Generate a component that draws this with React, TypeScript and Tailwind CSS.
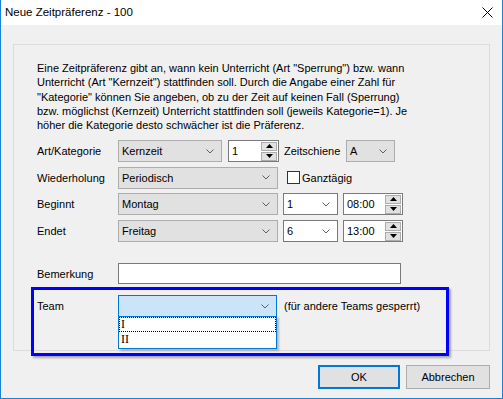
const font = "font-['Liberation_Sans',Arial,sans-serif]";

const Chevron = () => (
    <svg width="8" height="5" viewBox="0 0 8 5" className="shrink-0">
        <path d="M0.5 0.5 L4 4 L7.5 0.5" fill="none" stroke="#606060" strokeWidth="1" />
    </svg>
);

interface ComboProps {
    value: string
    width: string
    editable?: boolean
    focused?: boolean
};

const Combo = ({ value, width, editable, focused }: ComboProps) => {
    let cls = "bg-[#e1e1e1] border-[#adadad]";
    if (editable) cls = "bg-white border-[#7a7a7a]";
    if (focused) cls = "bg-[#cce4f7] border-[#0078d7]";
    return (
        <div className={`${width} h-[22px] border ${cls} flex items-center justify-between pl-[3px] pr-[7px]`}>
            <span>{value}</span>
            <Chevron />
        </div>
    );
}

const SpinArrows = () => (
    <div className="flex flex-col gap-[1px] w-[16px] mr-[1px]">
        <div className="h-[9px] bg-[#e1e1e1] border border-[#adadad] flex items-center justify-center">
            <svg width="7" height="4" viewBox="0 0 7 4"><path d="M0 4 L3.5 0 L7 4 Z" fill="#000" /></svg>
        </div>
        <div className="h-[9px] bg-[#e1e1e1] border border-[#adadad] flex items-center justify-center">
            <svg width="7" height="4" viewBox="0 0 7 4"><path d="M0 0 L3.5 4 L7 0 Z" fill="#000" /></svg>
        </div>
    </div>
);

const Spin = ({ value, width }: { value: string, width: string }) => (
    <div className={`${width} h-[22px] border border-[#7a7a7a] bg-white flex items-center justify-between pl-[3px]`}>
        <span>{value}</span>
        <SpinArrows />
    </div>
);

const Label = ({ children }: { children: React.ReactNode }) => (
    <span className="w-[81px] shrink-0">{children}</span>
);

export default function App() {
    return (
        <div className={`w-[503px] h-[399px] flex flex-col border-x border-b border-[#1883d7] text-[11px] text-black ${font}`}>
            <div className="h-[25px] bg-white flex items-center justify-between pl-[4px] pr-[9px] shrink-0">
                <span className="text-[11.5px]">Neue Zeitpräferenz - 100</span>
                <svg width="11" height="11" viewBox="0 0 11 11">
                    <path d="M0.5 0.5 L10.5 10.5 M10.5 0.5 L0.5 10.5" stroke="#000" strokeWidth="1" />
                </svg>
            </div>
            <div className="flex-1 bg-[#f0f0f0] flex flex-col pl-[12px] pr-[12px] pt-[19px] relative">
                <div className="w-[477px] h-[307px] border border-[#dcdcdc] pl-[23px] pt-[16px] flex flex-col">
                    <p className="leading-[14.3px] text-[11px] w-[380px] whitespace-nowrap">
                        Eine Zeitpräferenz gibt an, wann kein Unterricht (Art "Sperrung") bzw. wann<br />
                        Unterricht (Art "Kernzeit") stattfinden soll. Durch die Angabe einer Zahl für<br />
                        "Kategorie" können Sie angeben, ob zu der Zeit auf keinen Fall (Sperrung)<br />
                        bzw. möglichst (Kernzeit) Unterricht stattfinden soll (jeweils Kategorie=1). Je<br />
                        höher die Kategorie desto schwächer ist die Präferenz.
                    </p>
                    <div className="flex flex-col gap-[5px] mt-[8px]">
                        <div className="flex items-center h-[22px]">
                            <Label>Art/Kategorie</Label>
                            <Combo value="Kernzeit" width="w-[104px]" />
                            <div className="w-[6px]" />
                            <Spin value="1" width="w-[51px]" />
                            <span className="ml-[5px] w-[62px]">Zeitschiene</span>
                            <Combo value="A" width="w-[49px]" />
                        </div>
                        <div className="flex items-center h-[21px]">
                            <Label>Wiederholung</Label>
                            <Combo value="Periodisch" width="w-[160px]" />
                            <div className="ml-[9px] w-[13px] h-[13px] border border-[#333] bg-white" />
                            <span className="ml-[2px]">Ganztägig</span>
                        </div>
                        <div className="flex items-center h-[22px]">
                            <Label>Beginnt</Label>
                            <Combo value="Montag" width="w-[160px]" />
                            <div className="w-[5px]" />
                            <Combo value="1" width="w-[55px]" editable />
                            <div className="w-[5px]" />
                            <Spin value="08:00" width="w-[60px]" />
                        </div>
                        <div className="flex items-center h-[22px]">
                            <Label>Endet</Label>
                            <Combo value="Freitag" width="w-[160px]" />
                            <div className="w-[5px]" />
                            <Combo value="6" width="w-[55px]" editable />
                            <div className="w-[5px]" />
                            <Spin value="13:00" width="w-[60px]" />
                        </div>
                    </div>
                    <div className="flex items-center h-[21px] mt-[21px]">
                        <Label>Bemerkung</Label>
                        <div className="w-[283px] h-[21px] border border-[#7a7a7a] bg-white" />
                    </div>
                    <div className="flex items-center h-[22px] mt-[11px]">
                        <Label>Team</Label>
                        <div className="relative">
                            <Combo value="" width="w-[159px]" focused />
                            <div className="absolute left-0 top-[21px] w-[159px] h-[33px] bg-white border border-[#0078d7] shadow-[2px_2px_2px_rgba(0,0,0,0.25)] z-20 font-['Liberation_Serif',serif] text-[12px] flex flex-col">
                                <div className="h-[15px] border border-dotted border-black leading-[13px] pl-[1px]">I</div>
                                <div className="h-[15px] leading-[15px] pl-[2px]">II</div>
                            </div>
                        </div>
                        <span className="ml-[7px]">(für andere Teams gesperrt)</span>
                    </div>
                </div>
                <div className="absolute left-[30px] top-[262px] w-[418px] h-[69px] border-[3px] border-[#0000ff] shadow-[2px_2px_2px_rgba(0,0,0,0.3)] z-10 pointer-events-none" />
                <div className="flex justify-end gap-[6px] mt-[14px]">
                    <button className="w-[82px] h-[24px] bg-[#e1e1e1] border-2 border-[#0078d7]">OK</button>
                    <button className="w-[84px] h-[24px] bg-[#e1e1e1] border border-[#adadad]">Abbrechen</button>
                </div>
            </div>
        </div>
    );
}
